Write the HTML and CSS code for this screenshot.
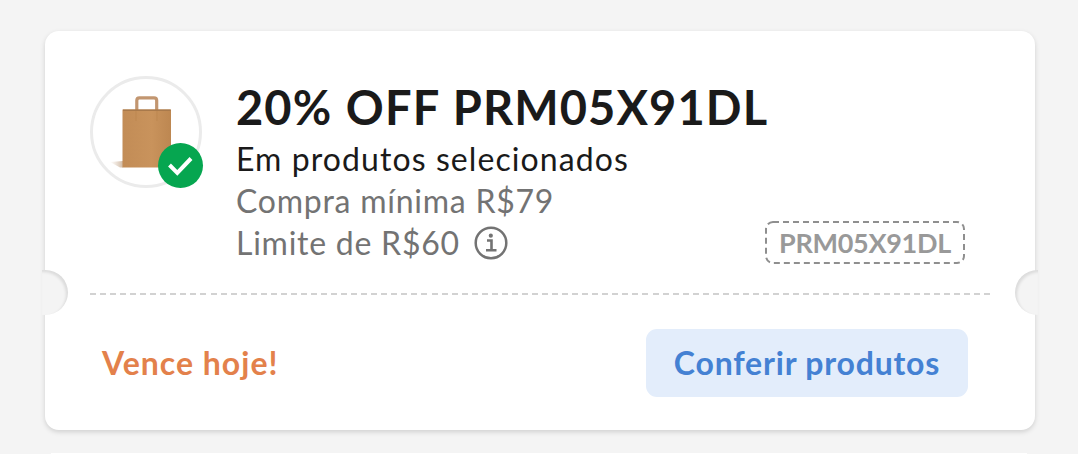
FILE: index.html
```html
<!DOCTYPE html>
<html lang="pt-BR">
<head>
    <meta charset="UTF-8">
    <meta name="viewport" content="width=device-width, initial-scale=1.0">
    <title>Cupons</title>
    <link rel="stylesheet" href="styles.css">
</head>
<body>
    <div class="coupon">
        <div class="coupon-top">
            <div class="logo">
                <svg class="bag" width="60" height="80" viewBox="0 0 60 80">
                    <defs>
                        <linearGradient id="paper" x1="0" y1="0" x2="1" y2="0">
                            <stop offset="0" stop-color="#c28c56"/>
                            <stop offset="0.6" stop-color="#c9935c"/>
                            <stop offset="1" stop-color="#bd8751"/>
                        </linearGradient>
                        <linearGradient id="shade" x1="0" y1="0" x2="1" y2="0">
                            <stop offset="0" stop-color="#c8a98a" stop-opacity="0"/>
                            <stop offset="1" stop-color="#b08a66"/>
                        </linearGradient>
                    </defs>
                    <path d="M-2 72 L11 71 V77.500 H8 Z" fill="url(#shade)" opacity="0.6"/>
                    <path d="M24.800 21 V10.500 Q24.800 7.800 27.500 7.800 H42 Q44.700 7.800 44.700 10.500 V21" fill="none" stroke="#c29670" stroke-width="3.200"/>
                    <rect x="10.500" y="19.500" width="48.500" height="58" fill="url(#paper)"/>
                    <path d="M11 20.300 H58.500" stroke="#a8794b" stroke-width="1.600"/>
                    <path d="M24 21 V31 M45 21 V31" stroke="#bd8751" stroke-width="1"/>
                </svg>
                <span class="check">
                    <svg width="45" height="45" viewBox="0 0 45 45">
                        <path d="M11.500 22 L19.300 29.800 L33 15.500" fill="none" stroke="#fff" stroke-width="4"/>
                    </svg>
                </span>
            </div>
            <div class="info">
                <h1>20% OFF PRM05X91DL</h1>
                <p class="scope">Em produtos selecionados</p>
                <p class="minimum">Compra mínima R$79</p>
                <p class="limit">
                    <span>Limite de R$60</span>
                    <svg width="34" height="34" viewBox="0 0 34 34">
                        <circle cx="17" cy="17" r="15.300" fill="none" stroke="#737373" stroke-width="2.500"/>
                        <path d="M13 14.500 H17.500 V24 M12 24.300 H22.500" fill="none" stroke="#737373" stroke-width="2.600"/>
                        <circle cx="16.800" cy="9.700" r="2.100" fill="#737373"/>
                    </svg>
                </p>
            </div>
            <div class="code">
                <svg width="200" height="43" viewBox="0 0 200 43">
                    <rect x="1" y="1" width="198" height="41" rx="7" fill="none" stroke="#8f8f8f" stroke-width="2" stroke-dasharray="6 4"/>
                </svg>
                <span>PRM05X91DL</span>
            </div>
        </div>
        <div class="divider"></div>
        <div class="coupon-bottom">
            <span class="expires">Vence hoje!</span>
            <a class="button" href="#"><span>Conferir produtos</span></a>
        </div>
        <i class="notch notch-left"></i>
        <i class="notch notch-right"></i>
    </div>
    <div class="next"></div>
</body>
</html>
```

FILE: styles.css
```css
* {
    margin: 0;
    padding: 0;
    box-sizing: border-box;
}

body {
    font-family: Lato, 'Open Sans', sans-serif;
    background: #f4f4f4;
    height: 454px;
    padding: 31px 43px 0 45px;
    overflow: hidden;
}

.coupon {
    position: relative;
    width: 990px;
    height: 399px;
    padding: 45px 45px 0;
    background: #fff;
    border-radius: 14px;
    box-shadow: 0 2px 5px rgba(0,0,0,0.15);
}

/* top edge of the coupon below */
.next {
    height: 1px;
    margin: 23px 8px 0 6px;
    background: #fff;
}

.coupon-top {
    display: flex;
    height: 217px;
}

.logo {
    position: relative;
    flex: none;
    width: 112px;
    height: 112px;
    border: 3px solid #ebebeb;
    border-radius: 50%;
}

.bag {
    display: block;
    margin: 11px 0 0 19px;
    overflow: visible;
}

.check {
    position: absolute;
    right: -4px;
    bottom: -3px;
    width: 45px;
    height: 45px;
    background: #06a650;
    border-radius: 50%;
}

.info {
    flex: 1;
    min-width: 0;
    padding-left: 34px;
    white-space: nowrap;
}

h1 {
    height: 62px;
    line-height: 62px;
    font-size: 47px;
    font-weight: 700;
    letter-spacing: 1.1px;
    word-spacing: 1px;
    color: #1a1a1a;
}

.info p {
    height: 42px;
    line-height: 42px;
    font-size: 32px;
    letter-spacing: 0.75px;
    color: #737373;
}

.info .scope {
    letter-spacing: 1.08px;
    color: #1a1a1a;
}

.info .limit {
    display: flex;
    align-items: center;
    gap: 14px;
}

.code {
    display: grid;
    place-items: center;
    flex: none;
    width: 200px;
    height: 43px;
    margin: 145px 25px 0 0;
    font-size: 27px;
    font-weight: 700;
    letter-spacing: -0.3px;
    color: #999;
}

.code svg,
.code span {
    grid-area: 1 / 1;
}

.divider {
    height: 2px;
    background: repeating-linear-gradient(90deg, #d2d2d2 0 6px, transparent 6px 10.045px);
}

.coupon-bottom {
    display: flex;
    justify-content: space-between;
    align-items: center;
    height: 68px;
    margin-top: 34px;
    padding: 0 22px 0 12px;
    font-size: 32px;
    font-weight: 700;
    white-space: nowrap;
}

.expires {
    padding-bottom: 2px;
    letter-spacing: 1px;
    color: #e3814b;
}

.button {
    display: flex;
    justify-content: center;
    align-items: center;
    width: 322px;
    height: 68px;
    padding-bottom: 2px;
    border-radius: 11px;
    background: #e3edfb;
    color: #4481d3;
    letter-spacing: 0.8px;
    text-decoration: none;
}

.notch {
    position: absolute;
    top: 239px;
    width: 26px;
    height: 45px;
    background: #f4f4f4;
}

.notch-left {
    left: -3px;
    border-radius: 0 23px 23px 0;
    box-shadow: inset -2px 2px 3px rgba(0,0,0,0.1);
}

.notch-right {
    right: -3px;
    width: 23px;
    border-radius: 23px 0 0 23px;
    box-shadow: inset 2px 2px 3px rgba(0,0,0,0.1);
}
```
